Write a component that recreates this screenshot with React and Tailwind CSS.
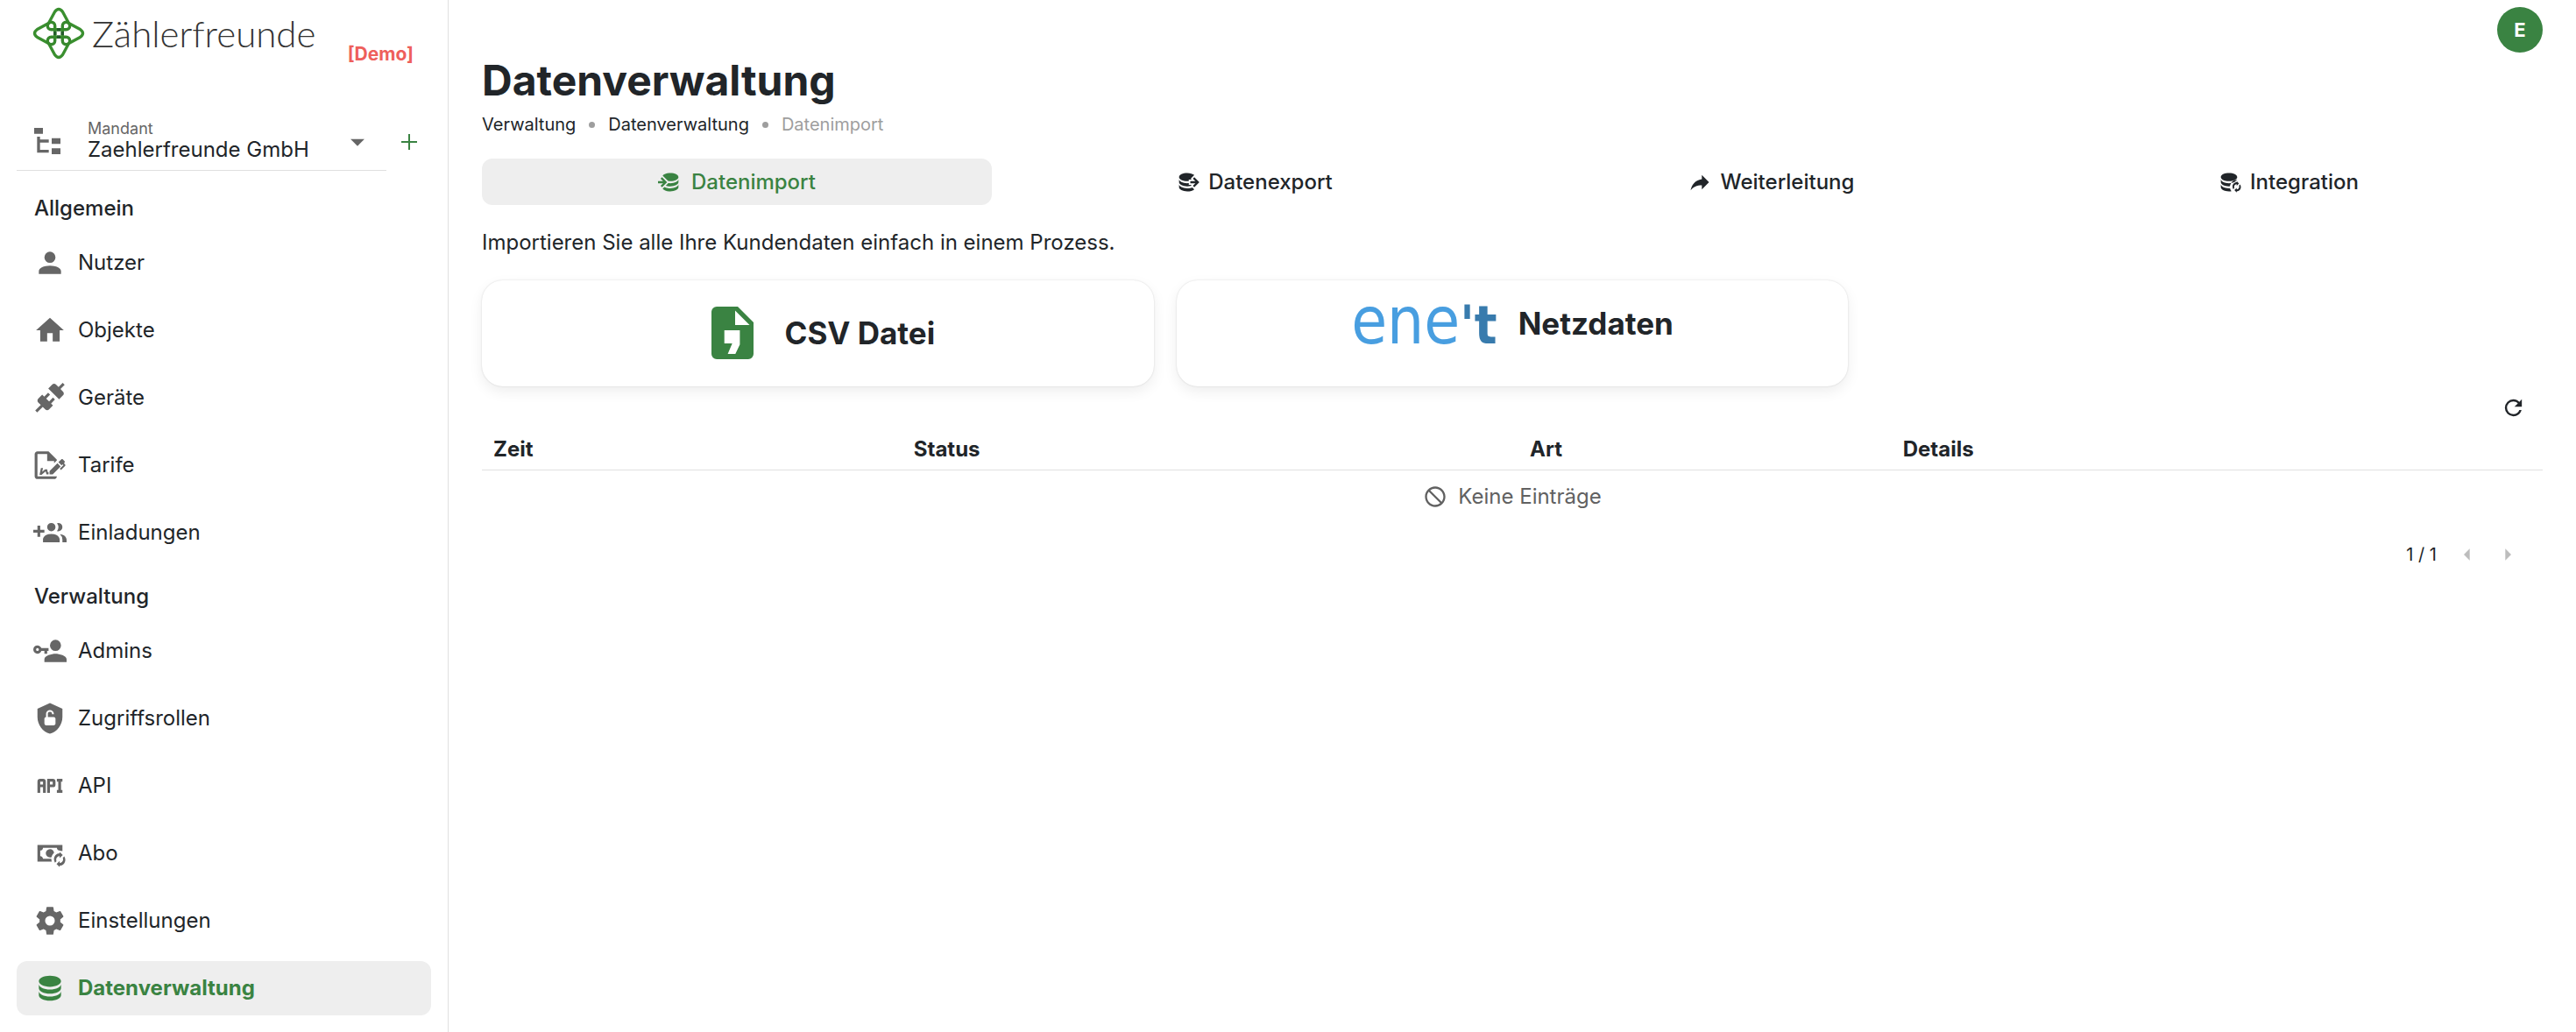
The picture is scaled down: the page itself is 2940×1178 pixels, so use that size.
const P = {
  account: "M12,4A4,4 0 0,1 16,8A4,4 0 0,1 12,12A4,4 0 0,1 8,8A4,4 0 0,1 12,4M12,14C16.42,14 20,15.79 20,18V20H4V18C4,15.79 7.58,14 12,14Z",
  home: "M10,20V14H14V20H19V12H22L12,3L2,12H5V20H10Z",
  connection: "M21.4 7.5C22.2 8.3 22.2 9.6 21.4 10.3L18.6 13.1L10.8 5.3L13.6 2.5C14.4 1.7 15.7 1.7 16.4 2.5L18.2 4.3L21.2 1.3L22.6 2.7L19.6 5.7L21.4 7.5M15.6 13.3L14.2 11.9L11.4 14.7L9.3 12.6L12.1 9.8L10.7 8.4L7.9 11.2L6.4 9.8L3.6 12.6C2.8 13.4 2.8 14.7 3.6 15.4L5.4 17.2L1.4 21.2L2.8 22.6L6.8 18.6L8.6 20.4C9.4 21.2 10.7 21.2 11.4 20.4L14.2 17.6L12.8 16.2L15.6 13.3Z",
  fileSign: "M19.7 12.9L14 18.6H11.7V16.3L17.4 10.6L19.7 12.9M23.1 12.1C23.1 12.4 22.8 12.7 22.5 13L20 15.5L19.1 14.6L21.7 12L21.1 11.4L20.4 12.1L18.1 9.8L20.3 7.7C20.5 7.5 20.9 7.5 21.2 7.7L22.6 9.1C22.8 9.3 22.8 9.7 22.6 10C22.4 10.2 22.2 10.4 22.2 10.6C22.2 10.8 22.4 11 22.6 11.2C22.9 11.5 23.2 11.8 23.1 12.1M3 20V4H10V9H15V10.5L17 8.5V8L11 2H3C1.9 2 1 2.9 1 4V20C1 21.1 1.9 22 3 22H15C16.1 22 17 21.1 17 20H3M11 17.1C10.8 17.1 10.6 17.2 10.5 17.2L10 15H8.5L6.4 16.7L7 14H5.5L4.5 19H6L8.9 16.4L9.5 18.7H10.5L11 18.6V17.1Z",
  accountsPlus: "M19 17V19H7V17S7 13 13 13 19 17 19 17M16 8A3 3 0 1 0 13 11A3 3 0 0 0 16 8M19.2 13.06A5.6 5.6 0 0 1 21 17V19H24V17S24 13.55 19.2 13.06M18 5A2.91 2.91 0 0 0 17.11 5.14A5 5 0 0 1 17.11 10.86A2.91 2.91 0 0 0 18 11A3 3 0 0 0 18 5M8 10H5V7H3V10H0V12H3V15H5V12H8Z",
  accountKey: "M11 10V12H10V14H8V12H5.83C5.42 13.17 4.31 14 3 14A3 3 0 0 1 0 11A3 3 0 0 1 3 8C4.31 8 5.42 8.83 5.83 10H11M3 10A1 1 0 0 0 2 11A1 1 0 0 0 3 12A1 1 0 0 0 4 11A1 1 0 0 0 3 10M16 14C18.67 14 24 15.34 24 18V20H8V18C8 15.34 13.33 14 16 14M16 12A4 4 0 0 1 12 8A4 4 0 0 1 16 4A4 4 0 0 1 20 8A4 4 0 0 1 16 12Z",
  shield: "M12 1L3 5V11C3 16.5 6.8 21.7 12 23C17.2 21.7 21 16.5 21 11V5L12 1M16 15.8C16 16.4 15.4 17 14.7 17H9.2C8.6 17 8 16.4 8 15.7V12.2C8 11.6 8.6 11 9.2 11V8.5C9.2 7.1 10.6 6 12 6S14.8 7.1 14.8 8.5V9H13.5V8.5C13.5 7.7 12.8 7.2 12 7.2S10.5 7.7 10.5 8.5V11H14.8C15.4 11 16 11.6 16 12.2V15.8Z",
  api: "M7 7H5A2 2 0 0 0 3 9V17H5V13H7V17H9V9A2 2 0 0 0 7 7M7 11H5V9H7M14 7H10V17H12V13H14A2 2 0 0 0 16 11V9A2 2 0 0 0 14 7M14 11H12V9H14M20 9V15H21V17H17V15H18V9H17V7H21V9Z",
  cashSync: "M3 6V18H13.32C13.1 17.33 13 16.66 13 16H7C7 14.9 6.11 14 5 14V10C6.11 10 7 9.11 7 8H17C17 9.11 17.9 10 19 10V10.06C19.67 10.06 20.34 10.18 21 10.4V6H3M12 9C10.3 9.03 9 10.3 9 12C9 13.7 10.3 14.94 12 15C12.38 15 12.77 14.92 13.14 14.77C13.41 13.67 13.86 12.63 14.97 11.61C14.85 10.28 13.59 8.97 12 9M19 11L21.25 13.25L19 15.5V14C17.15 14 15.94 16.04 16.77 17.67L15.68 18.76C13.71 15.8 15.76 12 19 12V11M19 22L16.75 19.75L19 17.5V19C20.85 19 22.06 16.96 21.23 15.33L22.32 14.24C24.29 17.2 22.24 21 19 21V22",
  cog: "M12,15.5A3.5,3.5 0 0,1 8.5,12A3.5,3.5 0 0,1 12,8.5A3.5,3.5 0 0,1 15.5,12A3.5,3.5 0 0,1 12,15.5M19.43,12.97C19.47,12.65 19.5,12.33 19.5,12C19.5,11.67 19.47,11.34 19.43,11L21.54,9.37C21.73,9.22 21.78,8.95 21.66,8.73L19.66,5.27C19.54,5.05 19.27,4.96 19.05,5.05L16.56,6.05C16.04,5.66 15.5,5.32 14.87,5.07L14.5,2.42C14.46,2.18 14.25,2 14,2H10C9.75,2 9.54,2.18 9.5,2.42L9.13,5.07C8.5,5.32 7.96,5.66 7.44,6.05L4.95,5.05C4.73,4.96 4.46,5.05 4.34,5.27L2.34,8.73C2.21,8.95 2.27,9.22 2.46,9.37L4.57,11C4.53,11.34 4.5,11.67 4.5,12C4.5,12.33 4.53,12.65 4.57,12.97L2.46,14.63C2.27,14.78 2.21,15.05 2.34,15.27L4.34,18.73C4.46,18.95 4.73,19.03 4.95,18.95L7.44,17.94C7.96,18.34 8.5,18.68 9.13,18.93L9.5,21.58C9.54,21.82 9.75,22 10,22H14C14.25,22 14.46,21.82 14.5,21.58L14.87,18.93C15.5,18.67 16.04,18.34 16.56,17.94L19.05,18.95C19.27,19.03 19.54,18.95 19.66,18.73L21.66,15.27C21.78,15.05 21.73,14.78 21.54,14.63L19.43,12.97Z",
  database: "M12,3C7.58,3 4,4.79 4,7C4,9.21 7.58,11 12,11C16.42,11 20,9.21 20,7C20,4.79 16.42,3 12,3M4,9V12C4,14.21 7.58,16 12,16C16.42,16 20,14.21 20,12V9C20,11.21 16.42,13 12,13C7.58,13 4,11.21 4,9M4,14V17C4,19.21 7.58,21 12,21C16.42,21 20,19.21 20,17V14C20,16.21 16.42,18 12,18C7.58,18 4,16.21 4,14Z",
  dbImport: "M12,3C8.59,3 5.69,4.07 4.54,5.57L9.79,10.82C10.5,10.93 11.22,11 12,11C16.42,11 20,9.21 20,7C20,4.79 16.42,3 12,3M3.92,7.08L2.5,8.5L5,11H0V13H5L2.5,15.5L3.92,16.92L8.84,12M20,9C20,11.21 16.42,13 12,13C11.34,13 10.7,12.95 10.09,12.87L7.62,15.34C8.88,15.75 10.38,16 12,16C16.42,16 20,14.21 20,12M20,14C20,16.21 16.42,18 12,18C9.72,18 7.67,17.5 6.21,16.75L4.53,18.43C5.68,19.93 8.59,21 12,21C16.42,21 20,19.21 20,17",
  dbExport: "M12,3C7.58,3 4,4.79 4,7C4,9.21 7.58,11 12,11C12.5,11 13,10.97 13.5,10.92V9.5H16.39L15.39,8.5L18.9,5C17.5,3.8 14.94,3 12,3M18.92,7.08L17.5,8.5L20,11H15V13H20L17.5,15.5L18.92,16.92L23.84,12M4,9V12C4,14.21 7.58,16 12,16C13.17,16 14.26,15.85 15.25,15.63L16.38,14.5H13.5V12.92C13,12.97 12.5,13 12,13C7.58,13 4,11.21 4,9M4,14V17C4,19.21 7.58,21 12,21C14.94,21 17.5,20.2 18.9,19L17,17.1C15.61,17.66 13.9,18 12,18C7.58,18 4,16.21 4,14Z",
  share: "M21,12L14,5V9C7,10 4,15 3,20C5.5,16.5 9,14.9 14,14.9V19L21,12Z",
  dbSync: "M12,3C7.58,3 4,4.79 4,7C4,9.21 7.58,11 12,11C16.42,11 20,9.21 20,7C20,4.79 16.42,3 12,3M4,9V12C4,14.21 7.58,16 12,16L12.9,15.96C13.1,14 14.3,11.6 16.4,10.4C18,10 19.4,9.7 20,9C18.8,11.6 16,13 12,13C7.58,13 4,11.21 4,9M4,14V17C4,19.21 7.58,21 12,21C12.9,21 13.6,20.94 14.4,20.82C13.7,19.9 13.2,18.9 13,17.96C12.7,17.98 12.4,18 12,18C7.58,18 4,16.21 4,14M19.5 11L21.75 13.25L19.5 15.5V14C17.65 14 16.44 16.04 17.27 17.67L16.18 18.76C14.21 15.8 16.26 12 19.5 12V11M19.5 22L17.25 19.75L19.5 17.5V19C21.35 19 22.56 16.96 21.73 15.33L22.82 14.24C24.79 17.2 22.74 21 19.5 21V22",
  fileTree: "M3,3H9V7H3V3M15,10H21V14H15V10M15,17H21V21H15V17M13,13H7V18H13V20H5V9H7V11H13V13Z",
  fileComma: "M14,2H6A2,2 0 0,0 4,4V20A2,2 0 0,0 6,22H18A2,2 0 0,0 20,20V8L14,2M13.1,20H10.2L11.9,16H8.9V11H14.8V16.4L13.1,20M13,9V3.5L18.5,9H13Z",
  cancel: "M12 2C17.5 2 22 6.5 22 12S17.5 22 12 22 2 17.5 2 12 6.5 2 12 2M12 4C10.1 4 8.4 4.6 7.1 5.7L18.3 16.9C19.3 15.5 20 13.8 20 12C20 7.6 16.4 4 12 4M16.9 18.3L5.7 7.1C4.6 8.4 4 10.1 4 12C4 16.4 7.6 20 12 20C13.9 20 15.6 19.4 16.9 18.3Z",
  refresh: "M17.65,6.35C16.2,4.9 14.21,4 12,4A8,8 0 0,0 4,12A8,8 0 0,0 12,20C15.73,20 18.84,17.45 19.73,14H17.65C16.83,16.33 14.61,18 12,18A6,6 0 0,1 6,12A6,6 0 0,1 12,6C13.66,6 15.14,6.69 16.22,7.78L13,11H20V4L17.65,6.35Z",
  down: "M7,10L12,15L17,10H7Z",
  left: "M14,7L9,12L14,17V7Z",
  right: "M10,17L15,12L10,7V17Z",
};

function Icon({ d, className }) {
  return (
    <svg viewBox="0 0 24 24" fill="currentColor" aria-hidden="true" className={`shrink-0 ${className}`}>
      <path d={d} />
    </svg>
  );
}

function LogoMark() {
  return (
    <svg viewBox="0 0 60 60" fill="none" strokeWidth="3.4" strokeLinejoin="round" aria-hidden="true" className="size-[60px] shrink-0">
      <path stroke="#3a8f2f" d="M18.5 18.5L25.5 5.5Q30 -0.5 34.5 5.5L41.5 18.5L54.5 25.5Q60.5 30 54.5 34.5L41.5 41.5L34.5 54.5Q30 60.5 25.5 54.5L18.5 41.5L5.5 34.5Q-0.5 30 5.5 25.5Z" />
      <path stroke="#37892d" d="M25.7 25.7H21.5A4.2 4.2 0 1 1 25.7 21.5V38.5A4.2 4.2 0 1 1 21.5 34.3H38.5A4.2 4.2 0 1 1 34.3 38.5V21.5A4.2 4.2 0 1 1 38.5 25.7Z" />
      <path stroke="#235c2a" d="M28 25.7H32M28 34.3H32M25.7 28V32M34.3 28V32" />
    </svg>
  );
}

function NavItem({ icon, label, active }) {
  return (
    <li>
      <a
        href="#"
        aria-current={active ? "page" : undefined}
        className={
          active
            ? "flex h-[62px] items-center gap-[13px] rounded-xl bg-[#eeeeee] pl-[19px] font-bold text-[#3a8342]"
            : "flex h-[62px] items-center gap-[13px] rounded-xl pl-[19px]"
        }
      >
        <Icon d={icon} className={active ? "size-[38px]" : "size-[38px] text-[#666666]"} />
        {label}
      </a>
    </li>
  );
}

function NavGroup({ title, items, className }) {
  return (
    <section className={className}>
      <h2 className="pl-5 leading-8 font-medium">{title}</h2>
      <ul className="mt-[15px] flex flex-col gap-[15px]">
        {items.map((item) => (
          <NavItem key={item.label} {...item} />
        ))}
      </ul>
    </section>
  );
}

const general = [
  { label: "Nutzer", icon: P.account },
  { label: "Objekte", icon: P.home },
  { label: "Geräte", icon: P.connection },
  { label: "Tarife", icon: P.fileSign },
  { label: "Einladungen", icon: P.accountsPlus },
];

const admin = [
  { label: "Admins", icon: P.accountKey },
  { label: "Zugriffsrollen", icon: P.shield },
  { label: "API", icon: P.api },
  { label: "Abo", icon: P.cashSync },
  { label: "Einstellungen", icon: P.cog },
  { label: "Datenverwaltung", icon: P.database, active: true },
];

const tabs = [
  { label: "Datenimport", icon: P.dbImport, active: true },
  { label: "Datenexport", icon: P.dbExport },
  { label: "Weiterleitung", icon: P.share },
  { label: "Integration", icon: P.dbSync },
];

function Sidebar() {
  return (
    <aside className="w-[512px] shrink-0 border-r border-[#e0e0e0] px-[19px] pt-2">
      <div className="flex h-[100px] items-start pl-[18px]">
        <LogoMark />
        <span className="ml-2 font-[Lato] text-[42px] leading-[60px] font-light text-[#333333]">Zählerfreunde</span>
        <span className="mt-10 ml-auto pr-5 text-[21px] leading-7 font-bold text-[#ee5f5b]">[Demo]</span>
      </div>
      <div className="flex items-end">
        <div className="relative flex h-[87px] w-[422px] items-end border-b border-[#e0e0e0] pb-[9px] pl-[15px]">
          <Icon d={P.fileTree} className="mb-1 size-10 text-[#666666]" />
          <div className="ml-[26px] flex flex-1 flex-col">
            <label htmlFor="tenant" className="text-lg leading-5 text-[#666666]">Mandant</label>
            <select id="tenant" className="h-7 w-full appearance-none bg-transparent leading-7">
              <option>Zaehlerfreunde GmbH</option>
            </select>
          </div>
          <Icon d={P.down} className="pointer-events-none absolute right-[14px] bottom-[13px] size-[38px] text-[#666666]" />
        </div>
        <button type="button" aria-label="Mandant hinzufügen" className="mb-[17px] ml-[10px] flex size-8 items-center justify-center text-[#3a8342]">
          <svg viewBox="0 0 18 18" stroke="currentColor" strokeWidth="2" aria-hidden="true" className="size-[18px]">
            <path d="M9 0V18M0 9H18" />
          </svg>
        </button>
      </div>
      <nav>
        <NavGroup title="Allgemein" items={general} className="mt-[27px]" />
        <NavGroup title="Verwaltung" items={admin} className="mt-[26px]" />
      </nav>
    </aside>
  );
}

export default function App() {
  return (
    <div className="flex min-h-screen bg-white font-[Inter,sans-serif] text-2xl leading-8 text-[#212529]">
      <Sidebar />
      <main className="flex min-w-0 flex-1 flex-col px-[38px] pt-2">
        <button type="button" aria-label="Konto" className="size-[52px] self-end rounded-full bg-[#3a8342] text-[22px] font-bold text-white">
          E
        </button>
        <h1 className="mt-1 text-5xl leading-[56px] font-bold">Datenverwaltung</h1>
        <nav aria-label="Brotkrumen" className="mt-2 flex items-center gap-[15px] text-xl leading-7">
          <a href="#">Verwaltung</a>
          <span className="size-[7px] rounded-full bg-[#9e9e9e]" />
          <a href="#">Datenverwaltung</a>
          <span className="size-[7px] rounded-full bg-[#9e9e9e]" />
          <span className="text-[#9e9e9e]">Datenimport</span>
        </nav>
        <div role="tablist" className="mt-[25px] grid grid-cols-4 gap-2">
          {tabs.map((t) => (
            <button
              key={t.label}
              type="button"
              role="tab"
              aria-selected={!!t.active}
              className={
                t.active
                  ? "flex h-[53px] items-center justify-center gap-[10px] rounded-xl bg-[#eeeeee] font-medium text-[#3a8342]"
                  : "flex h-[53px] items-center justify-center gap-[10px] rounded-xl font-medium"
              }
            >
              <Icon d={t.icon} className="size-7" />
              {t.label}
            </button>
          ))}
        </div>
        <p className="mt-[27px]">Importieren Sie alle Ihre Kundendaten einfach in einem Prozess.</p>
        <div className="mt-[27px] grid grid-cols-3 gap-[26px] text-[35px] font-bold">
          <button type="button" className="flex h-[121px] items-center justify-center gap-6 rounded-3xl pb-[2px] shadow-[0_0_2px_rgba(0,0,0,0.16),0_6px_16px_rgba(0,0,0,0.07)]">
            <Icon d={P.fileComma} className="size-[72px] text-[#3a8342]" />
            CSV Datei
          </button>
          <button type="button" className="flex h-[121px] items-start justify-center gap-6 rounded-3xl pt-6 shadow-[0_0_2px_rgba(0,0,0,0.16),0_6px_16px_rgba(0,0,0,0.07)]">
            <span className="flex items-baseline font-['DejaVu_Sans_Condensed','DejaVu_Sans',sans-serif] text-[74px] leading-[44px] font-normal text-[#489ee0]">
              ene<span className="text-[60px] font-bold text-[#387bad]">&#39;t</span>
            </span>
            <span className="leading-[50px]">Netzdaten</span>
          </button>
        </div>
        <button type="button" aria-label="Aktualisieren" className="mt-[2px] mr-3 flex size-11 items-center justify-center self-end">
          <Icon d={P.refresh} className="size-[29px]" />
        </button>
        <table className="w-full table-fixed text-left">
          <thead>
            <tr className="h-[49px] border-b border-[#e0e0e0]">
              <th className="w-[20.4%] px-[13px] pt-[3px] font-bold">Zeit</th>
              <th className="w-[29.9%] px-[13px] pt-[3px] font-bold">Status</th>
              <th className="w-[18.1%] px-[13px] pt-[3px] font-bold">Art</th>
              <th className="px-[13px] pt-[3px] font-bold">Details</th>
            </tr>
          </thead>
          <tbody>
            <tr className="h-[61px]">
              <td colSpan={4} className="text-[#616161]">
                <span className="flex items-center justify-center gap-3">
                  <Icon d={P.cancel} className="size-7" />
                  Keine Einträge
                </span>
              </td>
            </tr>
          </tbody>
        </table>
        <div className="mt-[14px] mr-[17px] flex items-center self-end text-xl">
          <span>1 / 1</span>
          <button type="button" disabled aria-label="Vorherige Seite" className="ml-3 flex h-11 w-[46px] items-center justify-center text-[#bdbdbd]">
            <Icon d={P.left} className="size-8" />
          </button>
          <button type="button" disabled aria-label="Nächste Seite" className="flex h-11 w-[46px] items-center justify-center text-[#bdbdbd]">
            <Icon d={P.right} className="size-8" />
          </button>
        </div>
      </main>
    </div>
  );
}
